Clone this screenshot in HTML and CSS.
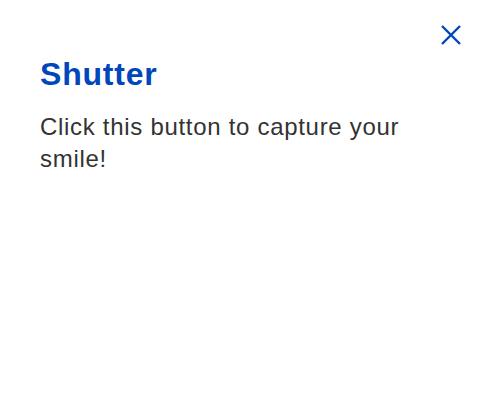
FILE: index.html
```html
<!DOCTYPE html>
<html>
<head>
<meta charset="utf-8">
<link rel="stylesheet" href="styles.css">
</head>
<body>
<div class="popover">
  <div class="top">
    <button class="close" aria-label="Close">
      <svg width="20" height="20" viewBox="0 0 20 20"><path d="M1 1 L19 19 M19 1 L1 19" stroke="#0047bb" stroke-width="2.4" fill="none"/></svg>
    </button>
  </div>
  <h1 class="title">Shutter</h1>
  <p class="text">Click this button to capture your smile!</p>
</div>
</body>
</html>
```
FILE: styles.css
```css
html, body { margin: 0; padding: 0; background: #fff; }
.popover {
  width: 486px;
  height: 412px;
  box-sizing: border-box;
  padding: 25px 25px 0 40px;
  font-family: "Liberation Sans", Arial, sans-serif;
}
.top { display: flex; justify-content: flex-end; height: 20px; }
.close { border: 0; background: none; padding: 0; width: 20px; height: 20px; cursor: pointer; }
.close svg { display: block; }
.title {
  margin: 11px 0 0;
  font-size: 32px;
  line-height: 36px;
  font-weight: 700;
  color: #0047bb;
  letter-spacing: 0.8px;
}
.text {
  margin: 19px 0 0;
  font-size: 24px;
  line-height: 32px;
  color: #333;
  letter-spacing: 0.7px;
  max-width: 380px;
}
```
